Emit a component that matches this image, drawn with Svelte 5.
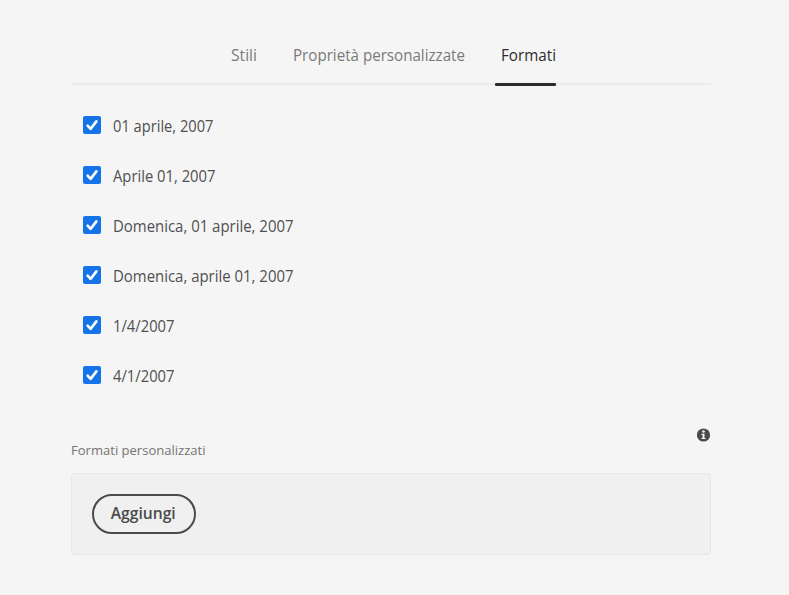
<script>
  const tabs = [
    { label: 'Stili', width: 26 },
    { label: 'Proprietà personalizzate', width: 172 },
    { label: 'Formati', width: 55, active: true }
  ];
  const formats = [
    { label: '01 aprile, 2007', width: 100.5 },
    { label: 'Aprile 01, 2007', width: 102.5 },
    { label: 'Domenica, 01 aprile, 2007', width: 180.5 },
    { label: 'Domenica, aprile 01, 2007', width: 180.5 },
    { label: '1/4/2007', width: 61.5 },
    { label: '4/1/2007', width: 61.5 }
  ];

  function fit(node, width) {
    const natural = node.getBoundingClientRect().width;
    node.style.transform = `scaleX(${width / natural})`;
  }
</script>

<main>
  <nav>
    {#each tabs as tab}
      <a class:active={tab.active} style:width="{tab.width}px"><span use:fit={tab.width}>{tab.label}</span></a>
    {/each}
  </nav>

  <ul>
    {#each formats as format}
      <li>
        <i class="box">
          <svg viewBox="0 0 18 18" width="18" height="18"><path d="M4.6 9.6 7.6 12.9 13.4 5.4" /></svg>
        </i>
        <span use:fit={format.width}>{format.label}</span>
      </li>
    {/each}
  </ul>

  <header>
    <h2><span use:fit={134.5}>Formati personalizzati</span></h2>
    <svg class="info" viewBox="0 0 14 14" width="14" height="14">
      <circle cx="6.5" cy="7" r="6.6" fill="#4b4b4b" />
      <circle cx="6.5" cy="3.6" r="1.25" fill="#f5f5f5" />
      <path d="M4.5 5.8h3v4.1h1v1.2h-4V9.9h1V7h-1z" fill="#f5f5f5" />
    </svg>
  </header>

  <section>
    <button><span use:fit={65}>Aggiungi</span></button>
  </section>
</main>

<style>
  :global(body) {
    background: #f5f5f5;
  }
  main {
    box-sizing: border-box;
    height: 595px;
    padding: 36px 78px 0 71px;
    overflow: hidden;
    font-family: 'Noto Sans', 'Open Sans', sans-serif;
    color: #505050;
  }
  span {
    display: inline-block;
    white-space: nowrap;
    transform-origin: left center;
  }
  nav {
    box-sizing: border-box;
    height: 49px;
    display: flex;
    gap: 36px;
    padding-left: 160px;
    border-bottom: 2px solid #eaeaea;
    font-family: 'Open Sans', 'Noto Sans', sans-serif;
    font-size: 16.5px;
    line-height: 38px;
    color: #7a7a7a;
  }
  nav a {
    position: relative;
  }
  .active {
    color: #2c2c2c;
  }
  .active::after {
    content: '';
    position: absolute;
    left: -6px;
    right: 0;
    top: 47px;
    height: 3px;
    border-radius: 1px;
    background: #2c2c2c;
  }
  ul {
    list-style: none;
    margin: 0;
    padding: 14px 0 0 12px;
    font-family: 'Open Sans', 'Noto Sans', sans-serif;
    font-size: 16.5px;
  }
  li {
    height: 50px;
    display: flex;
    align-items: center;
    gap: 12px;
  }
  li span {
    padding-top: 3px;
  }
  .box {
    width: 18px;
    height: 18px;
    margin-top: 1px;
    border-radius: 2px;
    background: #1473e6;
  }
  .box svg {
    display: block;
  }
  .box path {
    fill: none;
    stroke: #fff;
    stroke-width: 2.6;
    stroke-linecap: round;
    stroke-linejoin: round;
  }
  header {
    height: 74px;
    display: flex;
    justify-content: space-between;
    align-items: flex-start;
  }
  h2 {
    margin: 39px 0 0;
    font-family: 'Open Sans', 'Noto Sans', sans-serif;
    font-size: 13.5px;
    line-height: 24px;
    font-weight: 400;
    color: #747474;
  }
  .info {
    margin-top: 29px;
  }
  section {
    box-sizing: border-box;
    height: 82px;
    padding: 20px;
    border: 1px solid #e6e6e6;
    border-radius: 4px;
    background: #f0f0f0;
  }
  button {
    box-sizing: border-box;
    display: flex;
    align-items: center;
    justify-content: center;
    width: 104px;
    height: 40px;
    padding: 0 1px 2px 0;
    border: 2px solid #4b4b4b;
    border-radius: 20px;
    background: transparent;
    color: #4b4b4b;
    font: 600 16px 'Open Sans', 'Noto Sans', sans-serif;
  }
  button span {
    transform-origin: center;
  }
</style>
